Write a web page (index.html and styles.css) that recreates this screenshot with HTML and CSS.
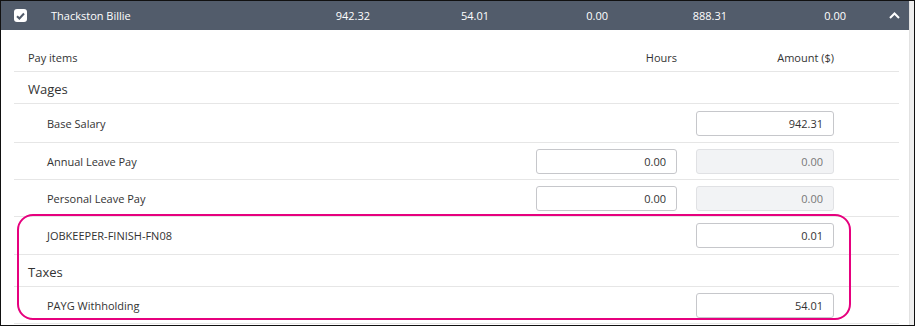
FILE: index.html
```html
<!DOCTYPE html>
<html>
<head>
<link rel="stylesheet" href="styles.css">
</head>
<body>

<div class="frame">
  <div class="panel">
    <div class="emp-bar">
      <span class="emp-check">
        <svg width="9" height="8" viewBox="0 0 9 8"><path d="M1 4.2 L3.4 6.5 L8 1.5" fill="none" stroke="#525c6b" stroke-width="2"/></svg>
      </span>
      <span class="emp-name">Thackston Billie</span>
      <span class="emp-num">942.32</span>
      <span class="emp-num">54.01</span>
      <span class="emp-num">0.00</span>
      <span class="emp-num">888.31</span>
      <span class="emp-num">0.00</span>
      <span class="emp-toggle">
        <svg width="11" height="7" viewBox="0 0 11 7"><path d="M1 6 L5.5 1.5 L10 6" fill="none" stroke="#fff" stroke-width="2"/></svg>
      </span>
    </div>

    <div class="pay-table">
      <div class="row head">
        <div class="cell-label">Pay items</div>
        <div class="cell-hours">Hours</div>
        <div class="cell-amount">Amount ($)</div>
      </div>

      <div class="row group">
        <div class="cell-label">Wages</div>
      </div>

      <div class="row item tall">
        <div class="cell-label">Base Salary</div>
        <div class="cell-hours"></div>
        <div class="cell-amount"><input class="field" type="text" value="942.31"></div>
      </div>

      <div class="row item">
        <div class="cell-label">Annual Leave Pay</div>
        <div class="cell-hours"><input class="field" type="text" value="0.00"></div>
        <div class="cell-amount"><input class="field" type="text" value="0.00" disabled></div>
      </div>

      <div class="row item">
        <div class="cell-label">Personal Leave Pay</div>
        <div class="cell-hours"><input class="field" type="text" value="0.00"></div>
        <div class="cell-amount"><input class="field" type="text" value="0.00" disabled></div>
      </div>

      <div class="row item mid">
        <div class="cell-label">JOBKEEPER-FINISH-FN08</div>
        <div class="cell-hours"></div>
        <div class="cell-amount"><input class="field" type="text" value="0.01"></div>
      </div>

      <div class="row group">
        <div class="cell-label">Taxes</div>
      </div>

      <div class="row item">
        <div class="cell-label">PAYG Withholding</div>
        <div class="cell-hours"></div>
        <div class="cell-amount"><input class="field" type="text" value="54.01"></div>
      </div>
    </div>

    <div class="highlight"></div>
  </div>
  <div class="scrollbar"></div>
</div>

</body>
</html>
```

FILE: styles.css
```css
body {
  margin: 0;
  font-family: "Open Sans", "Noto Sans", Arial, sans-serif;
  color: #333;
}

.frame {
  width: 915px;
  height: 326px;
  box-sizing: border-box;
  border: 1px solid #111;
  display: flex;
  overflow: hidden;
}

.panel {
  flex: 1;
  position: relative;
  background-color: #fff;
}

.scrollbar {
  width: 5px;
  background-color: #efefef;
  border-left: 1px solid #e2e2e2;
  box-sizing: border-box;
}

.emp-bar {
  display: grid;
  grid-template-columns: 37px 200px repeat(5, 119px) 1fr;
  align-items: center;
  height: 29px;
  padding-left: 13px;
  background-color: #525c6b;
  color: #fff;
  font-size: 11px;
}

.emp-check {
  width: 13px;
  height: 13px;
  border-radius: 3px;
  background-color: #fff;
  display: flex;
  align-items: center;
  justify-content: center;
}

.emp-num {
  text-align: right;
}

.emp-toggle {
  display: flex;
  justify-content: flex-end;
  padding-right: 9px;
}

.emp-toggle svg {
  display: block;
}

.pay-table {
  margin: 0 10px 0 13px;
}

.row {
  display: flex;
  align-items: center;
  box-sizing: border-box;
  border-bottom: 1px solid #e6e6e6;
  font-size: 11px;
}

.cell-label {
  flex: 1;
  padding-left: 14px;
}

.cell-hours {
  width: 141px;
  text-align: right;
}

.cell-amount {
  width: 138px;
  margin-left: 19px;
  margin-right: 65px;
  text-align: right;
}

.head {
  height: 42px;
  padding-top: 14px;
}

.group {
  height: 32px;
  padding-top: 3px;
  font-size: 13px;
}

.item {
  height: 37px;
}

.item.tall {
  height: 39px;
}

.item.mid {
  height: 38px;
}

.item .cell-label {
  padding-left: 33px;
}

.field {
  display: block;
  width: 100%;
  height: 25px;
  box-sizing: border-box;
  border: 1px solid #c6c7cb;
  border-radius: 3px;
  padding: 0 10px;
  text-align: right;
  font-family: inherit;
  font-size: 11px;
  color: #333;
  background-color: #fff;
}

.field:disabled {
  background-color: #f2f3f5;
  border-color: #e0e1e4;
  color: #777;
}

.highlight {
  position: absolute;
  left: 16px;
  top: 213px;
  width: 834px;
  height: 106px;
  box-sizing: border-box;
  border: 2px solid #e6007e;
  border-radius: 16px;
  pointer-events: none;
}
```
